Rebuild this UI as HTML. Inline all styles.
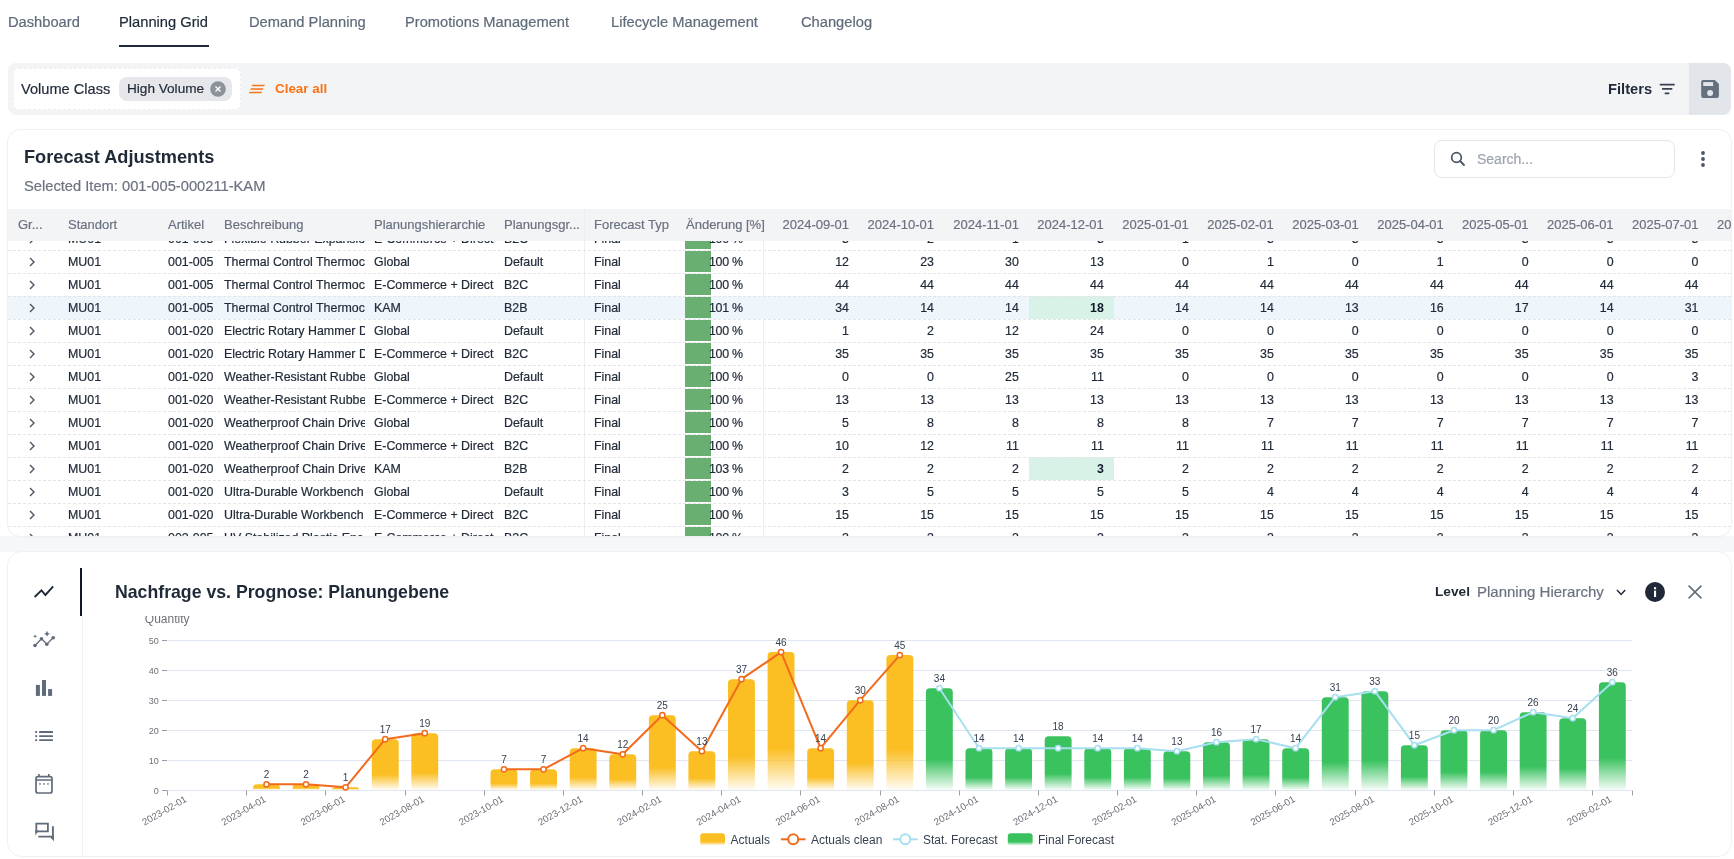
<!DOCTYPE html>
<html><head><meta charset="utf-8">
<style>
html,body{margin:0;padding:0;background:#fff;width:1734px;height:859px;overflow:hidden;}
body{position:relative;font-family:"Liberation Sans", sans-serif;}
#root{position:absolute;left:0;top:0;width:1734px;height:859px;will-change:transform;background:#fff}
.t{position:absolute;white-space:nowrap;line-height:20px;-webkit-text-stroke:0.2px currentColor}
.a{position:absolute;}
</style></head><body><div id="root">

<div class="a" style="left:0;top:536px;width:1734px;height:16px;background:#f6f7f9"></div>
<div class="t" style="left:8px;top:12.0px;font-size:14.7px;color:#5f6b7a;font-weight:400;">Dashboard</div>
<div class="t" style="left:119px;top:12.0px;font-size:14.7px;color:#1f2937;font-weight:400;">Planning Grid</div>
<div class="t" style="left:249px;top:12.0px;font-size:14.7px;color:#5f6b7a;font-weight:400;">Demand Planning</div>
<div class="t" style="left:405px;top:12.0px;font-size:14.7px;color:#5f6b7a;font-weight:400;">Promotions Management</div>
<div class="t" style="left:611px;top:12.0px;font-size:14.7px;color:#5f6b7a;font-weight:400;">Lifecycle Management</div>
<div class="t" style="left:801px;top:12.0px;font-size:14.7px;color:#5f6b7a;font-weight:400;">Changelog</div>
<div class="a" style="left:119px;top:45px;width:90px;height:2px;background:#1f2937"></div>
<div class="a" style="left:8px;top:63px;width:1723px;height:52px;background:#f3f4f6;border-radius:8px;overflow:hidden"><div class="a" style="right:0;top:0;width:42px;height:52px;background:#e2e5e9"></div></div>
<div class="a" style="left:13px;top:68px;width:228px;height:42px;background:#fff;border-radius:6px;box-sizing:border-box;border:1px dashed #eceef1"></div>
<div class="t" style="left:21px;top:78.5px;font-size:14.6px;color:#1f2937;font-weight:400;">Volume Class</div>
<div class="a" style="left:119px;top:77px;width:113px;height:24px;background:#e5e7eb;border-radius:8px"></div>
<div class="t" style="left:127px;top:78.5px;font-size:13.6px;color:#1f2937;font-weight:400;">High Volume</div>
<svg class="a" style="left:210px;top:81px" width="16" height="16" viewBox="0 0 16 16"><circle cx="8" cy="8" r="7.8" fill="#8b929a"/><path d="M5.5 5.5L10.5 10.5M10.5 5.5L5.5 10.5" stroke="#fff" stroke-width="1.4"/></svg>
<svg class="a" style="left:246px;top:80px" width="22" height="16" viewBox="246 80 22 16"><path d="M252.4 84.7H265L264.1 86.3H251.5Z M251 88.2H263.6L262.7 89.8H250.1Z M249.6 91.7H262.2L261.3 93.3H248.7Z" fill="#f97316"/></svg>
<div class="t" style="left:275px;top:78.5px;font-size:13.4px;color:#f97316;font-weight:700;;-webkit-text-stroke:0">Clear all</div>
<div class="t" style="left:1608px;top:78.5px;font-size:14.7px;color:#1f2937;font-weight:700;;-webkit-text-stroke:0">Filters</div>
<svg class="a" style="left:1659px;top:82px" width="16" height="14" viewBox="0 0 16 14"><path d="M1.5 2.6H15M3.8 6.9H12.6M6.4 11.3H9.6" stroke="#374151" stroke-width="1.8" stroke-linecap="round"/></svg>
<svg class="a" style="left:1700px;top:78px" width="20" height="21" viewBox="1700 78 20 21"><path d="M1703.2 79.9H1714.9L1718.9 83.9V95.9Q1718.9 97.9 1716.9 97.9H1703.2Q1701.2 97.9 1701.2 95.9V81.9Q1701.2 79.9 1703.2 79.9Z" fill="#64707d"/><rect x="1703.2" y="82.1" width="9.9" height="3.9" fill="#e2e5e9"/><circle cx="1710.1" cy="93.1" r="3" fill="#e2e5e9"/></svg>
<div class="a" style="left:8px;top:130px;width:1723px;height:406px;background:#fff;border-radius:13px;box-shadow:0 0 0 1px #f0f1f3,0 1px 3px rgba(0,0,0,0.03);overflow:hidden" id="card1">
<div class="t" style="left:16px;top:16.5px;font-size:18.2px;color:#1f2937;font-weight:700;;-webkit-text-stroke:0">Forecast Adjustments</div>
<div class="t" style="left:16px;top:46.0px;font-size:14.7px;color:#6b7280;font-weight:400;">Selected Item: 001-005-000211-KAM</div>
<div class="a" style="left:1426px;top:10px;width:241px;height:38px;box-sizing:border-box;border:1px solid #e3e6ea;border-radius:8px;background:#fff"></div>
<svg class="a" style="left:1442px;top:21px" width="16" height="16" viewBox="0 0 16 16"><circle cx="6.5" cy="6.5" r="4.8" fill="none" stroke="#4b5563" stroke-width="1.7"/><path d="M10 10L14 14" stroke="#4b5563" stroke-width="1.8" stroke-linecap="round"/></svg>
<div class="t" style="left:1469px;top:19.0px;font-size:14px;color:#9ca3af;font-weight:400;">Search...</div>
<svg class="a" style="left:1691px;top:20px" width="8" height="18" viewBox="0 0 8 18"><circle cx="4" cy="3" r="1.9" fill="#4b5563"/><circle cx="4" cy="9" r="1.9" fill="#4b5563"/><circle cx="4" cy="15" r="1.9" fill="#4b5563"/></svg>
<div class="a" style="left:0;top:79px;width:1723px;height:32px;background:#f3f4f6"></div>
<div class="t" style="left:10px;top:84.5px;font-size:13px;color:#6b7280;font-weight:400;">Gr...</div>
<div class="t" style="left:60px;top:84.5px;font-size:13px;color:#6b7280;font-weight:400;">Standort</div>
<div class="t" style="left:160px;top:84.5px;font-size:13px;color:#6b7280;font-weight:400;">Artikel</div>
<div class="t" style="left:216px;top:84.5px;font-size:13px;color:#6b7280;font-weight:400;">Beschreibung</div>
<div class="t" style="left:366px;top:84.5px;font-size:13px;color:#6b7280;font-weight:400;">Planungshierarchie</div>
<div class="t" style="left:496px;top:84.5px;font-size:13px;color:#6b7280;font-weight:400;">Planungsgr...</div>
<div class="t" style="left:586px;top:84.5px;font-size:13px;color:#6b7280;font-weight:400;">Forecast Typ</div>
<div class="t" style="left:678px;top:84.5px;font-size:13px;color:#6b7280;font-weight:400;">Änderung [%]</div>
<div class="t" style="left:441.0px;width:400px;top:84.5px;font-size:13px;color:#6b7280;font-weight:400;text-align:right;">2024-09-01</div>
<div class="t" style="left:526.0px;width:400px;top:84.5px;font-size:13px;color:#6b7280;font-weight:400;text-align:right;">2024-10-01</div>
<div class="t" style="left:610.9px;width:400px;top:84.5px;font-size:13px;color:#6b7280;font-weight:400;text-align:right;">2024-11-01</div>
<div class="t" style="left:695.8px;width:400px;top:84.5px;font-size:13px;color:#6b7280;font-weight:400;text-align:right;">2024-12-01</div>
<div class="t" style="left:780.8px;width:400px;top:84.5px;font-size:13px;color:#6b7280;font-weight:400;text-align:right;">2025-01-01</div>
<div class="t" style="left:865.8px;width:400px;top:84.5px;font-size:13px;color:#6b7280;font-weight:400;text-align:right;">2025-02-01</div>
<div class="t" style="left:950.7px;width:400px;top:84.5px;font-size:13px;color:#6b7280;font-weight:400;text-align:right;">2025-03-01</div>
<div class="t" style="left:1035.7px;width:400px;top:84.5px;font-size:13px;color:#6b7280;font-weight:400;text-align:right;">2025-04-01</div>
<div class="t" style="left:1120.6px;width:400px;top:84.5px;font-size:13px;color:#6b7280;font-weight:400;text-align:right;">2025-05-01</div>
<div class="t" style="left:1205.6px;width:400px;top:84.5px;font-size:13px;color:#6b7280;font-weight:400;text-align:right;">2025-06-01</div>
<div class="t" style="left:1290.5px;width:400px;top:84.5px;font-size:13px;color:#6b7280;font-weight:400;text-align:right;">2025-07-01</div>
<div class="t" style="left:1375.5px;width:400px;top:84.5px;font-size:13px;color:#6b7280;font-weight:400;text-align:right;">2025-08-01</div>
<div class="a" style="left:576px;top:79px;width:1px;height:327px;background:#eceef1"></div>
<div class="a" style="left:755px;top:111px;width:1px;height:295px;background:#eceef1"></div>
<div class="a" style="left:0;top:111px;width:1723px;height:295px;overflow:hidden">
<div class="a" style="left:0;top:55px;width:1723px;height:23px;background:#eef5fb"></div>
<div class="a" style="left:1021px;top:55px;width:85px;height:23px;background:#d9f2e8"></div>
<div class="a" style="left:1021px;top:216px;width:85px;height:23px;background:#d9f2e8"></div>
<div class="a" style="left:0;top:9px;width:1723px;height:1px;background:repeating-linear-gradient(90deg,#e3e5e9 0 3px,transparent 3px 5px)"></div>
<div class="a" style="left:677px;top:-13px;width:26px;height:21px;background:#6aaf72"></div>
<svg class="a" style="left:20px;top:-7.5px" width="8" height="10" viewBox="0 0 8 10"><path d="M2 1L6 5L2 9" fill="none" stroke="#4b5563" stroke-width="1.4"/></svg>
<div class="t" style="left:60px;top:-12.5px;font-size:12.4px;color:#1f2937;font-weight:400;">MU01</div>
<div class="t" style="left:160px;top:-12.5px;font-size:12.4px;color:#1f2937;font-weight:400;">001-005</div>
<div class="a" style="left:216px;top:-12.5px;width:141px;overflow:hidden"><div class="t" style="position:relative;font-size:12.4px;color:#1f2937">Flexible Rubber Expansio</div></div>
<div class="t" style="left:366px;top:-12.5px;font-size:12.4px;color:#1f2937;font-weight:400;">E-Commerce + Direct</div>
<div class="t" style="left:496px;top:-12.5px;font-size:12.4px;color:#1f2937;font-weight:400;">B2C</div>
<div class="t" style="left:586px;top:-12.5px;font-size:12.4px;color:#1f2937;font-weight:400;">Final</div>
<div class="t" style="left:701px;top:-12.5px;font-size:12.4px;color:#1f2937;font-weight:400;letter-spacing:-0.3px">100 %</div>
<div class="t" style="left:441.0px;width:400px;top:-12.5px;font-size:12.4px;color:#1f2937;font-weight:400;text-align:right;">3</div>
<div class="t" style="left:526.0px;width:400px;top:-12.5px;font-size:12.4px;color:#1f2937;font-weight:400;text-align:right;">2</div>
<div class="t" style="left:610.9px;width:400px;top:-12.5px;font-size:12.4px;color:#1f2937;font-weight:400;text-align:right;">1</div>
<div class="t" style="left:695.8px;width:400px;top:-12.5px;font-size:12.4px;color:#1f2937;font-weight:400;text-align:right;">3</div>
<div class="t" style="left:780.8px;width:400px;top:-12.5px;font-size:12.4px;color:#1f2937;font-weight:400;text-align:right;">1</div>
<div class="t" style="left:865.8px;width:400px;top:-12.5px;font-size:12.4px;color:#1f2937;font-weight:400;text-align:right;">3</div>
<div class="t" style="left:950.7px;width:400px;top:-12.5px;font-size:12.4px;color:#1f2937;font-weight:400;text-align:right;">3</div>
<div class="t" style="left:1035.7px;width:400px;top:-12.5px;font-size:12.4px;color:#1f2937;font-weight:400;text-align:right;">3</div>
<div class="t" style="left:1120.6px;width:400px;top:-12.5px;font-size:12.4px;color:#1f2937;font-weight:400;text-align:right;">3</div>
<div class="t" style="left:1205.6px;width:400px;top:-12.5px;font-size:12.4px;color:#1f2937;font-weight:400;text-align:right;">3</div>
<div class="t" style="left:1290.5px;width:400px;top:-12.5px;font-size:12.4px;color:#1f2937;font-weight:400;text-align:right;">3</div>
<div class="t" style="left:1375.5px;width:400px;top:-12.5px;font-size:12.4px;color:#1f2937;font-weight:400;text-align:right;">3</div>
<div class="a" style="left:0;top:32px;width:1723px;height:1px;background:repeating-linear-gradient(90deg,#e3e5e9 0 3px,transparent 3px 5px)"></div>
<div class="a" style="left:677px;top:10px;width:26px;height:21px;background:#6aaf72"></div>
<svg class="a" style="left:20px;top:15.5px" width="8" height="10" viewBox="0 0 8 10"><path d="M2 1L6 5L2 9" fill="none" stroke="#4b5563" stroke-width="1.4"/></svg>
<div class="t" style="left:60px;top:10.5px;font-size:12.4px;color:#1f2937;font-weight:400;">MU01</div>
<div class="t" style="left:160px;top:10.5px;font-size:12.4px;color:#1f2937;font-weight:400;">001-005</div>
<div class="a" style="left:216px;top:10.5px;width:141px;overflow:hidden"><div class="t" style="position:relative;font-size:12.4px;color:#1f2937">Thermal Control Thermoc</div></div>
<div class="t" style="left:366px;top:10.5px;font-size:12.4px;color:#1f2937;font-weight:400;">Global</div>
<div class="t" style="left:496px;top:10.5px;font-size:12.4px;color:#1f2937;font-weight:400;">Default</div>
<div class="t" style="left:586px;top:10.5px;font-size:12.4px;color:#1f2937;font-weight:400;">Final</div>
<div class="t" style="left:701px;top:10.5px;font-size:12.4px;color:#1f2937;font-weight:400;letter-spacing:-0.3px">100 %</div>
<div class="t" style="left:441.0px;width:400px;top:10.5px;font-size:12.4px;color:#1f2937;font-weight:400;text-align:right;">12</div>
<div class="t" style="left:526.0px;width:400px;top:10.5px;font-size:12.4px;color:#1f2937;font-weight:400;text-align:right;">23</div>
<div class="t" style="left:610.9px;width:400px;top:10.5px;font-size:12.4px;color:#1f2937;font-weight:400;text-align:right;">30</div>
<div class="t" style="left:695.8px;width:400px;top:10.5px;font-size:12.4px;color:#1f2937;font-weight:400;text-align:right;">13</div>
<div class="t" style="left:780.8px;width:400px;top:10.5px;font-size:12.4px;color:#1f2937;font-weight:400;text-align:right;">0</div>
<div class="t" style="left:865.8px;width:400px;top:10.5px;font-size:12.4px;color:#1f2937;font-weight:400;text-align:right;">1</div>
<div class="t" style="left:950.7px;width:400px;top:10.5px;font-size:12.4px;color:#1f2937;font-weight:400;text-align:right;">0</div>
<div class="t" style="left:1035.7px;width:400px;top:10.5px;font-size:12.4px;color:#1f2937;font-weight:400;text-align:right;">1</div>
<div class="t" style="left:1120.6px;width:400px;top:10.5px;font-size:12.4px;color:#1f2937;font-weight:400;text-align:right;">0</div>
<div class="t" style="left:1205.6px;width:400px;top:10.5px;font-size:12.4px;color:#1f2937;font-weight:400;text-align:right;">0</div>
<div class="t" style="left:1290.5px;width:400px;top:10.5px;font-size:12.4px;color:#1f2937;font-weight:400;text-align:right;">0</div>
<div class="t" style="left:1375.5px;width:400px;top:10.5px;font-size:12.4px;color:#1f2937;font-weight:400;text-align:right;">0</div>
<div class="a" style="left:0;top:55px;width:1723px;height:1px;background:repeating-linear-gradient(90deg,#e3e5e9 0 3px,transparent 3px 5px)"></div>
<div class="a" style="left:677px;top:33px;width:26px;height:21px;background:#6aaf72"></div>
<svg class="a" style="left:20px;top:38.5px" width="8" height="10" viewBox="0 0 8 10"><path d="M2 1L6 5L2 9" fill="none" stroke="#4b5563" stroke-width="1.4"/></svg>
<div class="t" style="left:60px;top:33.5px;font-size:12.4px;color:#1f2937;font-weight:400;">MU01</div>
<div class="t" style="left:160px;top:33.5px;font-size:12.4px;color:#1f2937;font-weight:400;">001-005</div>
<div class="a" style="left:216px;top:33.5px;width:141px;overflow:hidden"><div class="t" style="position:relative;font-size:12.4px;color:#1f2937">Thermal Control Thermoc</div></div>
<div class="t" style="left:366px;top:33.5px;font-size:12.4px;color:#1f2937;font-weight:400;">E-Commerce + Direct</div>
<div class="t" style="left:496px;top:33.5px;font-size:12.4px;color:#1f2937;font-weight:400;">B2C</div>
<div class="t" style="left:586px;top:33.5px;font-size:12.4px;color:#1f2937;font-weight:400;">Final</div>
<div class="t" style="left:701px;top:33.5px;font-size:12.4px;color:#1f2937;font-weight:400;letter-spacing:-0.3px">100 %</div>
<div class="t" style="left:441.0px;width:400px;top:33.5px;font-size:12.4px;color:#1f2937;font-weight:400;text-align:right;">44</div>
<div class="t" style="left:526.0px;width:400px;top:33.5px;font-size:12.4px;color:#1f2937;font-weight:400;text-align:right;">44</div>
<div class="t" style="left:610.9px;width:400px;top:33.5px;font-size:12.4px;color:#1f2937;font-weight:400;text-align:right;">44</div>
<div class="t" style="left:695.8px;width:400px;top:33.5px;font-size:12.4px;color:#1f2937;font-weight:400;text-align:right;">44</div>
<div class="t" style="left:780.8px;width:400px;top:33.5px;font-size:12.4px;color:#1f2937;font-weight:400;text-align:right;">44</div>
<div class="t" style="left:865.8px;width:400px;top:33.5px;font-size:12.4px;color:#1f2937;font-weight:400;text-align:right;">44</div>
<div class="t" style="left:950.7px;width:400px;top:33.5px;font-size:12.4px;color:#1f2937;font-weight:400;text-align:right;">44</div>
<div class="t" style="left:1035.7px;width:400px;top:33.5px;font-size:12.4px;color:#1f2937;font-weight:400;text-align:right;">44</div>
<div class="t" style="left:1120.6px;width:400px;top:33.5px;font-size:12.4px;color:#1f2937;font-weight:400;text-align:right;">44</div>
<div class="t" style="left:1205.6px;width:400px;top:33.5px;font-size:12.4px;color:#1f2937;font-weight:400;text-align:right;">44</div>
<div class="t" style="left:1290.5px;width:400px;top:33.5px;font-size:12.4px;color:#1f2937;font-weight:400;text-align:right;">44</div>
<div class="t" style="left:1375.5px;width:400px;top:33.5px;font-size:12.4px;color:#1f2937;font-weight:400;text-align:right;">44</div>
<div class="a" style="left:0;top:78px;width:1723px;height:1px;background:repeating-linear-gradient(90deg,#e3e5e9 0 3px,transparent 3px 5px)"></div>
<div class="a" style="left:677px;top:56px;width:26px;height:21px;background:#6aaf72"></div>
<svg class="a" style="left:20px;top:61.5px" width="8" height="10" viewBox="0 0 8 10"><path d="M2 1L6 5L2 9" fill="none" stroke="#4b5563" stroke-width="1.4"/></svg>
<div class="t" style="left:60px;top:56.5px;font-size:12.4px;color:#1f2937;font-weight:400;">MU01</div>
<div class="t" style="left:160px;top:56.5px;font-size:12.4px;color:#1f2937;font-weight:400;">001-005</div>
<div class="a" style="left:216px;top:56.5px;width:141px;overflow:hidden"><div class="t" style="position:relative;font-size:12.4px;color:#1f2937">Thermal Control Thermoc</div></div>
<div class="t" style="left:366px;top:56.5px;font-size:12.4px;color:#1f2937;font-weight:400;">KAM</div>
<div class="t" style="left:496px;top:56.5px;font-size:12.4px;color:#1f2937;font-weight:400;">B2B</div>
<div class="t" style="left:586px;top:56.5px;font-size:12.4px;color:#1f2937;font-weight:400;">Final</div>
<div class="t" style="left:701px;top:56.5px;font-size:12.4px;color:#1f2937;font-weight:400;letter-spacing:-0.3px">101 %</div>
<div class="t" style="left:441.0px;width:400px;top:56.5px;font-size:12.4px;color:#1f2937;font-weight:400;text-align:right;">34</div>
<div class="t" style="left:526.0px;width:400px;top:56.5px;font-size:12.4px;color:#1f2937;font-weight:400;text-align:right;">14</div>
<div class="t" style="left:610.9px;width:400px;top:56.5px;font-size:12.4px;color:#1f2937;font-weight:400;text-align:right;">14</div>
<div class="t" style="left:695.8px;width:400px;top:56.5px;font-size:12.4px;color:#111827;font-weight:700;text-align:right;;-webkit-text-stroke:0">18</div>
<div class="t" style="left:780.8px;width:400px;top:56.5px;font-size:12.4px;color:#1f2937;font-weight:400;text-align:right;">14</div>
<div class="t" style="left:865.8px;width:400px;top:56.5px;font-size:12.4px;color:#1f2937;font-weight:400;text-align:right;">14</div>
<div class="t" style="left:950.7px;width:400px;top:56.5px;font-size:12.4px;color:#1f2937;font-weight:400;text-align:right;">13</div>
<div class="t" style="left:1035.7px;width:400px;top:56.5px;font-size:12.4px;color:#1f2937;font-weight:400;text-align:right;">16</div>
<div class="t" style="left:1120.6px;width:400px;top:56.5px;font-size:12.4px;color:#1f2937;font-weight:400;text-align:right;">17</div>
<div class="t" style="left:1205.6px;width:400px;top:56.5px;font-size:12.4px;color:#1f2937;font-weight:400;text-align:right;">14</div>
<div class="t" style="left:1290.5px;width:400px;top:56.5px;font-size:12.4px;color:#1f2937;font-weight:400;text-align:right;">31</div>
<div class="t" style="left:1375.5px;width:400px;top:56.5px;font-size:12.4px;color:#1f2937;font-weight:400;text-align:right;">33</div>
<div class="a" style="left:0;top:101px;width:1723px;height:1px;background:repeating-linear-gradient(90deg,#e3e5e9 0 3px,transparent 3px 5px)"></div>
<div class="a" style="left:677px;top:79px;width:26px;height:21px;background:#6aaf72"></div>
<svg class="a" style="left:20px;top:84.5px" width="8" height="10" viewBox="0 0 8 10"><path d="M2 1L6 5L2 9" fill="none" stroke="#4b5563" stroke-width="1.4"/></svg>
<div class="t" style="left:60px;top:79.5px;font-size:12.4px;color:#1f2937;font-weight:400;">MU01</div>
<div class="t" style="left:160px;top:79.5px;font-size:12.4px;color:#1f2937;font-weight:400;">001-020</div>
<div class="a" style="left:216px;top:79.5px;width:141px;overflow:hidden"><div class="t" style="position:relative;font-size:12.4px;color:#1f2937">Electric Rotary Hammer D</div></div>
<div class="t" style="left:366px;top:79.5px;font-size:12.4px;color:#1f2937;font-weight:400;">Global</div>
<div class="t" style="left:496px;top:79.5px;font-size:12.4px;color:#1f2937;font-weight:400;">Default</div>
<div class="t" style="left:586px;top:79.5px;font-size:12.4px;color:#1f2937;font-weight:400;">Final</div>
<div class="t" style="left:701px;top:79.5px;font-size:12.4px;color:#1f2937;font-weight:400;letter-spacing:-0.3px">100 %</div>
<div class="t" style="left:441.0px;width:400px;top:79.5px;font-size:12.4px;color:#1f2937;font-weight:400;text-align:right;">1</div>
<div class="t" style="left:526.0px;width:400px;top:79.5px;font-size:12.4px;color:#1f2937;font-weight:400;text-align:right;">2</div>
<div class="t" style="left:610.9px;width:400px;top:79.5px;font-size:12.4px;color:#1f2937;font-weight:400;text-align:right;">12</div>
<div class="t" style="left:695.8px;width:400px;top:79.5px;font-size:12.4px;color:#1f2937;font-weight:400;text-align:right;">24</div>
<div class="t" style="left:780.8px;width:400px;top:79.5px;font-size:12.4px;color:#1f2937;font-weight:400;text-align:right;">0</div>
<div class="t" style="left:865.8px;width:400px;top:79.5px;font-size:12.4px;color:#1f2937;font-weight:400;text-align:right;">0</div>
<div class="t" style="left:950.7px;width:400px;top:79.5px;font-size:12.4px;color:#1f2937;font-weight:400;text-align:right;">0</div>
<div class="t" style="left:1035.7px;width:400px;top:79.5px;font-size:12.4px;color:#1f2937;font-weight:400;text-align:right;">0</div>
<div class="t" style="left:1120.6px;width:400px;top:79.5px;font-size:12.4px;color:#1f2937;font-weight:400;text-align:right;">0</div>
<div class="t" style="left:1205.6px;width:400px;top:79.5px;font-size:12.4px;color:#1f2937;font-weight:400;text-align:right;">0</div>
<div class="t" style="left:1290.5px;width:400px;top:79.5px;font-size:12.4px;color:#1f2937;font-weight:400;text-align:right;">0</div>
<div class="t" style="left:1375.5px;width:400px;top:79.5px;font-size:12.4px;color:#1f2937;font-weight:400;text-align:right;">0</div>
<div class="a" style="left:0;top:124px;width:1723px;height:1px;background:repeating-linear-gradient(90deg,#e3e5e9 0 3px,transparent 3px 5px)"></div>
<div class="a" style="left:677px;top:102px;width:26px;height:21px;background:#6aaf72"></div>
<svg class="a" style="left:20px;top:107.5px" width="8" height="10" viewBox="0 0 8 10"><path d="M2 1L6 5L2 9" fill="none" stroke="#4b5563" stroke-width="1.4"/></svg>
<div class="t" style="left:60px;top:102.5px;font-size:12.4px;color:#1f2937;font-weight:400;">MU01</div>
<div class="t" style="left:160px;top:102.5px;font-size:12.4px;color:#1f2937;font-weight:400;">001-020</div>
<div class="a" style="left:216px;top:102.5px;width:141px;overflow:hidden"><div class="t" style="position:relative;font-size:12.4px;color:#1f2937">Electric Rotary Hammer D</div></div>
<div class="t" style="left:366px;top:102.5px;font-size:12.4px;color:#1f2937;font-weight:400;">E-Commerce + Direct</div>
<div class="t" style="left:496px;top:102.5px;font-size:12.4px;color:#1f2937;font-weight:400;">B2C</div>
<div class="t" style="left:586px;top:102.5px;font-size:12.4px;color:#1f2937;font-weight:400;">Final</div>
<div class="t" style="left:701px;top:102.5px;font-size:12.4px;color:#1f2937;font-weight:400;letter-spacing:-0.3px">100 %</div>
<div class="t" style="left:441.0px;width:400px;top:102.5px;font-size:12.4px;color:#1f2937;font-weight:400;text-align:right;">35</div>
<div class="t" style="left:526.0px;width:400px;top:102.5px;font-size:12.4px;color:#1f2937;font-weight:400;text-align:right;">35</div>
<div class="t" style="left:610.9px;width:400px;top:102.5px;font-size:12.4px;color:#1f2937;font-weight:400;text-align:right;">35</div>
<div class="t" style="left:695.8px;width:400px;top:102.5px;font-size:12.4px;color:#1f2937;font-weight:400;text-align:right;">35</div>
<div class="t" style="left:780.8px;width:400px;top:102.5px;font-size:12.4px;color:#1f2937;font-weight:400;text-align:right;">35</div>
<div class="t" style="left:865.8px;width:400px;top:102.5px;font-size:12.4px;color:#1f2937;font-weight:400;text-align:right;">35</div>
<div class="t" style="left:950.7px;width:400px;top:102.5px;font-size:12.4px;color:#1f2937;font-weight:400;text-align:right;">35</div>
<div class="t" style="left:1035.7px;width:400px;top:102.5px;font-size:12.4px;color:#1f2937;font-weight:400;text-align:right;">35</div>
<div class="t" style="left:1120.6px;width:400px;top:102.5px;font-size:12.4px;color:#1f2937;font-weight:400;text-align:right;">35</div>
<div class="t" style="left:1205.6px;width:400px;top:102.5px;font-size:12.4px;color:#1f2937;font-weight:400;text-align:right;">35</div>
<div class="t" style="left:1290.5px;width:400px;top:102.5px;font-size:12.4px;color:#1f2937;font-weight:400;text-align:right;">35</div>
<div class="t" style="left:1375.5px;width:400px;top:102.5px;font-size:12.4px;color:#1f2937;font-weight:400;text-align:right;">35</div>
<div class="a" style="left:0;top:147px;width:1723px;height:1px;background:repeating-linear-gradient(90deg,#e3e5e9 0 3px,transparent 3px 5px)"></div>
<div class="a" style="left:677px;top:125px;width:26px;height:21px;background:#6aaf72"></div>
<svg class="a" style="left:20px;top:130.5px" width="8" height="10" viewBox="0 0 8 10"><path d="M2 1L6 5L2 9" fill="none" stroke="#4b5563" stroke-width="1.4"/></svg>
<div class="t" style="left:60px;top:125.5px;font-size:12.4px;color:#1f2937;font-weight:400;">MU01</div>
<div class="t" style="left:160px;top:125.5px;font-size:12.4px;color:#1f2937;font-weight:400;">001-020</div>
<div class="a" style="left:216px;top:125.5px;width:141px;overflow:hidden"><div class="t" style="position:relative;font-size:12.4px;color:#1f2937">Weather-Resistant Rubbe</div></div>
<div class="t" style="left:366px;top:125.5px;font-size:12.4px;color:#1f2937;font-weight:400;">Global</div>
<div class="t" style="left:496px;top:125.5px;font-size:12.4px;color:#1f2937;font-weight:400;">Default</div>
<div class="t" style="left:586px;top:125.5px;font-size:12.4px;color:#1f2937;font-weight:400;">Final</div>
<div class="t" style="left:701px;top:125.5px;font-size:12.4px;color:#1f2937;font-weight:400;letter-spacing:-0.3px">100 %</div>
<div class="t" style="left:441.0px;width:400px;top:125.5px;font-size:12.4px;color:#1f2937;font-weight:400;text-align:right;">0</div>
<div class="t" style="left:526.0px;width:400px;top:125.5px;font-size:12.4px;color:#1f2937;font-weight:400;text-align:right;">0</div>
<div class="t" style="left:610.9px;width:400px;top:125.5px;font-size:12.4px;color:#1f2937;font-weight:400;text-align:right;">25</div>
<div class="t" style="left:695.8px;width:400px;top:125.5px;font-size:12.4px;color:#1f2937;font-weight:400;text-align:right;">11</div>
<div class="t" style="left:780.8px;width:400px;top:125.5px;font-size:12.4px;color:#1f2937;font-weight:400;text-align:right;">0</div>
<div class="t" style="left:865.8px;width:400px;top:125.5px;font-size:12.4px;color:#1f2937;font-weight:400;text-align:right;">0</div>
<div class="t" style="left:950.7px;width:400px;top:125.5px;font-size:12.4px;color:#1f2937;font-weight:400;text-align:right;">0</div>
<div class="t" style="left:1035.7px;width:400px;top:125.5px;font-size:12.4px;color:#1f2937;font-weight:400;text-align:right;">0</div>
<div class="t" style="left:1120.6px;width:400px;top:125.5px;font-size:12.4px;color:#1f2937;font-weight:400;text-align:right;">0</div>
<div class="t" style="left:1205.6px;width:400px;top:125.5px;font-size:12.4px;color:#1f2937;font-weight:400;text-align:right;">0</div>
<div class="t" style="left:1290.5px;width:400px;top:125.5px;font-size:12.4px;color:#1f2937;font-weight:400;text-align:right;">3</div>
<div class="t" style="left:1375.5px;width:400px;top:125.5px;font-size:12.4px;color:#1f2937;font-weight:400;text-align:right;">3</div>
<div class="a" style="left:0;top:170px;width:1723px;height:1px;background:repeating-linear-gradient(90deg,#e3e5e9 0 3px,transparent 3px 5px)"></div>
<div class="a" style="left:677px;top:148px;width:26px;height:21px;background:#6aaf72"></div>
<svg class="a" style="left:20px;top:153.5px" width="8" height="10" viewBox="0 0 8 10"><path d="M2 1L6 5L2 9" fill="none" stroke="#4b5563" stroke-width="1.4"/></svg>
<div class="t" style="left:60px;top:148.5px;font-size:12.4px;color:#1f2937;font-weight:400;">MU01</div>
<div class="t" style="left:160px;top:148.5px;font-size:12.4px;color:#1f2937;font-weight:400;">001-020</div>
<div class="a" style="left:216px;top:148.5px;width:141px;overflow:hidden"><div class="t" style="position:relative;font-size:12.4px;color:#1f2937">Weather-Resistant Rubbe</div></div>
<div class="t" style="left:366px;top:148.5px;font-size:12.4px;color:#1f2937;font-weight:400;">E-Commerce + Direct</div>
<div class="t" style="left:496px;top:148.5px;font-size:12.4px;color:#1f2937;font-weight:400;">B2C</div>
<div class="t" style="left:586px;top:148.5px;font-size:12.4px;color:#1f2937;font-weight:400;">Final</div>
<div class="t" style="left:701px;top:148.5px;font-size:12.4px;color:#1f2937;font-weight:400;letter-spacing:-0.3px">100 %</div>
<div class="t" style="left:441.0px;width:400px;top:148.5px;font-size:12.4px;color:#1f2937;font-weight:400;text-align:right;">13</div>
<div class="t" style="left:526.0px;width:400px;top:148.5px;font-size:12.4px;color:#1f2937;font-weight:400;text-align:right;">13</div>
<div class="t" style="left:610.9px;width:400px;top:148.5px;font-size:12.4px;color:#1f2937;font-weight:400;text-align:right;">13</div>
<div class="t" style="left:695.8px;width:400px;top:148.5px;font-size:12.4px;color:#1f2937;font-weight:400;text-align:right;">13</div>
<div class="t" style="left:780.8px;width:400px;top:148.5px;font-size:12.4px;color:#1f2937;font-weight:400;text-align:right;">13</div>
<div class="t" style="left:865.8px;width:400px;top:148.5px;font-size:12.4px;color:#1f2937;font-weight:400;text-align:right;">13</div>
<div class="t" style="left:950.7px;width:400px;top:148.5px;font-size:12.4px;color:#1f2937;font-weight:400;text-align:right;">13</div>
<div class="t" style="left:1035.7px;width:400px;top:148.5px;font-size:12.4px;color:#1f2937;font-weight:400;text-align:right;">13</div>
<div class="t" style="left:1120.6px;width:400px;top:148.5px;font-size:12.4px;color:#1f2937;font-weight:400;text-align:right;">13</div>
<div class="t" style="left:1205.6px;width:400px;top:148.5px;font-size:12.4px;color:#1f2937;font-weight:400;text-align:right;">13</div>
<div class="t" style="left:1290.5px;width:400px;top:148.5px;font-size:12.4px;color:#1f2937;font-weight:400;text-align:right;">13</div>
<div class="t" style="left:1375.5px;width:400px;top:148.5px;font-size:12.4px;color:#1f2937;font-weight:400;text-align:right;">13</div>
<div class="a" style="left:0;top:193px;width:1723px;height:1px;background:repeating-linear-gradient(90deg,#e3e5e9 0 3px,transparent 3px 5px)"></div>
<div class="a" style="left:677px;top:171px;width:26px;height:21px;background:#6aaf72"></div>
<svg class="a" style="left:20px;top:176.5px" width="8" height="10" viewBox="0 0 8 10"><path d="M2 1L6 5L2 9" fill="none" stroke="#4b5563" stroke-width="1.4"/></svg>
<div class="t" style="left:60px;top:171.5px;font-size:12.4px;color:#1f2937;font-weight:400;">MU01</div>
<div class="t" style="left:160px;top:171.5px;font-size:12.4px;color:#1f2937;font-weight:400;">001-020</div>
<div class="a" style="left:216px;top:171.5px;width:141px;overflow:hidden"><div class="t" style="position:relative;font-size:12.4px;color:#1f2937">Weatherproof Chain Drive</div></div>
<div class="t" style="left:366px;top:171.5px;font-size:12.4px;color:#1f2937;font-weight:400;">Global</div>
<div class="t" style="left:496px;top:171.5px;font-size:12.4px;color:#1f2937;font-weight:400;">Default</div>
<div class="t" style="left:586px;top:171.5px;font-size:12.4px;color:#1f2937;font-weight:400;">Final</div>
<div class="t" style="left:701px;top:171.5px;font-size:12.4px;color:#1f2937;font-weight:400;letter-spacing:-0.3px">100 %</div>
<div class="t" style="left:441.0px;width:400px;top:171.5px;font-size:12.4px;color:#1f2937;font-weight:400;text-align:right;">5</div>
<div class="t" style="left:526.0px;width:400px;top:171.5px;font-size:12.4px;color:#1f2937;font-weight:400;text-align:right;">8</div>
<div class="t" style="left:610.9px;width:400px;top:171.5px;font-size:12.4px;color:#1f2937;font-weight:400;text-align:right;">8</div>
<div class="t" style="left:695.8px;width:400px;top:171.5px;font-size:12.4px;color:#1f2937;font-weight:400;text-align:right;">8</div>
<div class="t" style="left:780.8px;width:400px;top:171.5px;font-size:12.4px;color:#1f2937;font-weight:400;text-align:right;">8</div>
<div class="t" style="left:865.8px;width:400px;top:171.5px;font-size:12.4px;color:#1f2937;font-weight:400;text-align:right;">7</div>
<div class="t" style="left:950.7px;width:400px;top:171.5px;font-size:12.4px;color:#1f2937;font-weight:400;text-align:right;">7</div>
<div class="t" style="left:1035.7px;width:400px;top:171.5px;font-size:12.4px;color:#1f2937;font-weight:400;text-align:right;">7</div>
<div class="t" style="left:1120.6px;width:400px;top:171.5px;font-size:12.4px;color:#1f2937;font-weight:400;text-align:right;">7</div>
<div class="t" style="left:1205.6px;width:400px;top:171.5px;font-size:12.4px;color:#1f2937;font-weight:400;text-align:right;">7</div>
<div class="t" style="left:1290.5px;width:400px;top:171.5px;font-size:12.4px;color:#1f2937;font-weight:400;text-align:right;">7</div>
<div class="t" style="left:1375.5px;width:400px;top:171.5px;font-size:12.4px;color:#1f2937;font-weight:400;text-align:right;">7</div>
<div class="a" style="left:0;top:216px;width:1723px;height:1px;background:repeating-linear-gradient(90deg,#e3e5e9 0 3px,transparent 3px 5px)"></div>
<div class="a" style="left:677px;top:194px;width:26px;height:21px;background:#6aaf72"></div>
<svg class="a" style="left:20px;top:199.5px" width="8" height="10" viewBox="0 0 8 10"><path d="M2 1L6 5L2 9" fill="none" stroke="#4b5563" stroke-width="1.4"/></svg>
<div class="t" style="left:60px;top:194.5px;font-size:12.4px;color:#1f2937;font-weight:400;">MU01</div>
<div class="t" style="left:160px;top:194.5px;font-size:12.4px;color:#1f2937;font-weight:400;">001-020</div>
<div class="a" style="left:216px;top:194.5px;width:141px;overflow:hidden"><div class="t" style="position:relative;font-size:12.4px;color:#1f2937">Weatherproof Chain Drive</div></div>
<div class="t" style="left:366px;top:194.5px;font-size:12.4px;color:#1f2937;font-weight:400;">E-Commerce + Direct</div>
<div class="t" style="left:496px;top:194.5px;font-size:12.4px;color:#1f2937;font-weight:400;">B2C</div>
<div class="t" style="left:586px;top:194.5px;font-size:12.4px;color:#1f2937;font-weight:400;">Final</div>
<div class="t" style="left:701px;top:194.5px;font-size:12.4px;color:#1f2937;font-weight:400;letter-spacing:-0.3px">100 %</div>
<div class="t" style="left:441.0px;width:400px;top:194.5px;font-size:12.4px;color:#1f2937;font-weight:400;text-align:right;">10</div>
<div class="t" style="left:526.0px;width:400px;top:194.5px;font-size:12.4px;color:#1f2937;font-weight:400;text-align:right;">12</div>
<div class="t" style="left:610.9px;width:400px;top:194.5px;font-size:12.4px;color:#1f2937;font-weight:400;text-align:right;">11</div>
<div class="t" style="left:695.8px;width:400px;top:194.5px;font-size:12.4px;color:#1f2937;font-weight:400;text-align:right;">11</div>
<div class="t" style="left:780.8px;width:400px;top:194.5px;font-size:12.4px;color:#1f2937;font-weight:400;text-align:right;">11</div>
<div class="t" style="left:865.8px;width:400px;top:194.5px;font-size:12.4px;color:#1f2937;font-weight:400;text-align:right;">11</div>
<div class="t" style="left:950.7px;width:400px;top:194.5px;font-size:12.4px;color:#1f2937;font-weight:400;text-align:right;">11</div>
<div class="t" style="left:1035.7px;width:400px;top:194.5px;font-size:12.4px;color:#1f2937;font-weight:400;text-align:right;">11</div>
<div class="t" style="left:1120.6px;width:400px;top:194.5px;font-size:12.4px;color:#1f2937;font-weight:400;text-align:right;">11</div>
<div class="t" style="left:1205.6px;width:400px;top:194.5px;font-size:12.4px;color:#1f2937;font-weight:400;text-align:right;">11</div>
<div class="t" style="left:1290.5px;width:400px;top:194.5px;font-size:12.4px;color:#1f2937;font-weight:400;text-align:right;">11</div>
<div class="t" style="left:1375.5px;width:400px;top:194.5px;font-size:12.4px;color:#1f2937;font-weight:400;text-align:right;">11</div>
<div class="a" style="left:0;top:239px;width:1723px;height:1px;background:repeating-linear-gradient(90deg,#e3e5e9 0 3px,transparent 3px 5px)"></div>
<div class="a" style="left:677px;top:217px;width:26px;height:21px;background:#6aaf72"></div>
<svg class="a" style="left:20px;top:222.5px" width="8" height="10" viewBox="0 0 8 10"><path d="M2 1L6 5L2 9" fill="none" stroke="#4b5563" stroke-width="1.4"/></svg>
<div class="t" style="left:60px;top:217.5px;font-size:12.4px;color:#1f2937;font-weight:400;">MU01</div>
<div class="t" style="left:160px;top:217.5px;font-size:12.4px;color:#1f2937;font-weight:400;">001-020</div>
<div class="a" style="left:216px;top:217.5px;width:141px;overflow:hidden"><div class="t" style="position:relative;font-size:12.4px;color:#1f2937">Weatherproof Chain Drive</div></div>
<div class="t" style="left:366px;top:217.5px;font-size:12.4px;color:#1f2937;font-weight:400;">KAM</div>
<div class="t" style="left:496px;top:217.5px;font-size:12.4px;color:#1f2937;font-weight:400;">B2B</div>
<div class="t" style="left:586px;top:217.5px;font-size:12.4px;color:#1f2937;font-weight:400;">Final</div>
<div class="t" style="left:701px;top:217.5px;font-size:12.4px;color:#1f2937;font-weight:400;letter-spacing:-0.3px">103 %</div>
<div class="t" style="left:441.0px;width:400px;top:217.5px;font-size:12.4px;color:#1f2937;font-weight:400;text-align:right;">2</div>
<div class="t" style="left:526.0px;width:400px;top:217.5px;font-size:12.4px;color:#1f2937;font-weight:400;text-align:right;">2</div>
<div class="t" style="left:610.9px;width:400px;top:217.5px;font-size:12.4px;color:#1f2937;font-weight:400;text-align:right;">2</div>
<div class="t" style="left:695.8px;width:400px;top:217.5px;font-size:12.4px;color:#111827;font-weight:700;text-align:right;;-webkit-text-stroke:0">3</div>
<div class="t" style="left:780.8px;width:400px;top:217.5px;font-size:12.4px;color:#1f2937;font-weight:400;text-align:right;">2</div>
<div class="t" style="left:865.8px;width:400px;top:217.5px;font-size:12.4px;color:#1f2937;font-weight:400;text-align:right;">2</div>
<div class="t" style="left:950.7px;width:400px;top:217.5px;font-size:12.4px;color:#1f2937;font-weight:400;text-align:right;">2</div>
<div class="t" style="left:1035.7px;width:400px;top:217.5px;font-size:12.4px;color:#1f2937;font-weight:400;text-align:right;">2</div>
<div class="t" style="left:1120.6px;width:400px;top:217.5px;font-size:12.4px;color:#1f2937;font-weight:400;text-align:right;">2</div>
<div class="t" style="left:1205.6px;width:400px;top:217.5px;font-size:12.4px;color:#1f2937;font-weight:400;text-align:right;">2</div>
<div class="t" style="left:1290.5px;width:400px;top:217.5px;font-size:12.4px;color:#1f2937;font-weight:400;text-align:right;">2</div>
<div class="t" style="left:1375.5px;width:400px;top:217.5px;font-size:12.4px;color:#1f2937;font-weight:400;text-align:right;">2</div>
<div class="a" style="left:0;top:262px;width:1723px;height:1px;background:repeating-linear-gradient(90deg,#e3e5e9 0 3px,transparent 3px 5px)"></div>
<div class="a" style="left:677px;top:240px;width:26px;height:21px;background:#6aaf72"></div>
<svg class="a" style="left:20px;top:245.5px" width="8" height="10" viewBox="0 0 8 10"><path d="M2 1L6 5L2 9" fill="none" stroke="#4b5563" stroke-width="1.4"/></svg>
<div class="t" style="left:60px;top:240.5px;font-size:12.4px;color:#1f2937;font-weight:400;">MU01</div>
<div class="t" style="left:160px;top:240.5px;font-size:12.4px;color:#1f2937;font-weight:400;">001-020</div>
<div class="a" style="left:216px;top:240.5px;width:141px;overflow:hidden"><div class="t" style="position:relative;font-size:12.4px;color:#1f2937">Ultra-Durable Workbench</div></div>
<div class="t" style="left:366px;top:240.5px;font-size:12.4px;color:#1f2937;font-weight:400;">Global</div>
<div class="t" style="left:496px;top:240.5px;font-size:12.4px;color:#1f2937;font-weight:400;">Default</div>
<div class="t" style="left:586px;top:240.5px;font-size:12.4px;color:#1f2937;font-weight:400;">Final</div>
<div class="t" style="left:701px;top:240.5px;font-size:12.4px;color:#1f2937;font-weight:400;letter-spacing:-0.3px">100 %</div>
<div class="t" style="left:441.0px;width:400px;top:240.5px;font-size:12.4px;color:#1f2937;font-weight:400;text-align:right;">3</div>
<div class="t" style="left:526.0px;width:400px;top:240.5px;font-size:12.4px;color:#1f2937;font-weight:400;text-align:right;">5</div>
<div class="t" style="left:610.9px;width:400px;top:240.5px;font-size:12.4px;color:#1f2937;font-weight:400;text-align:right;">5</div>
<div class="t" style="left:695.8px;width:400px;top:240.5px;font-size:12.4px;color:#1f2937;font-weight:400;text-align:right;">5</div>
<div class="t" style="left:780.8px;width:400px;top:240.5px;font-size:12.4px;color:#1f2937;font-weight:400;text-align:right;">5</div>
<div class="t" style="left:865.8px;width:400px;top:240.5px;font-size:12.4px;color:#1f2937;font-weight:400;text-align:right;">4</div>
<div class="t" style="left:950.7px;width:400px;top:240.5px;font-size:12.4px;color:#1f2937;font-weight:400;text-align:right;">4</div>
<div class="t" style="left:1035.7px;width:400px;top:240.5px;font-size:12.4px;color:#1f2937;font-weight:400;text-align:right;">4</div>
<div class="t" style="left:1120.6px;width:400px;top:240.5px;font-size:12.4px;color:#1f2937;font-weight:400;text-align:right;">4</div>
<div class="t" style="left:1205.6px;width:400px;top:240.5px;font-size:12.4px;color:#1f2937;font-weight:400;text-align:right;">4</div>
<div class="t" style="left:1290.5px;width:400px;top:240.5px;font-size:12.4px;color:#1f2937;font-weight:400;text-align:right;">4</div>
<div class="t" style="left:1375.5px;width:400px;top:240.5px;font-size:12.4px;color:#1f2937;font-weight:400;text-align:right;">4</div>
<div class="a" style="left:0;top:285px;width:1723px;height:1px;background:repeating-linear-gradient(90deg,#e3e5e9 0 3px,transparent 3px 5px)"></div>
<div class="a" style="left:677px;top:263px;width:26px;height:21px;background:#6aaf72"></div>
<svg class="a" style="left:20px;top:268.5px" width="8" height="10" viewBox="0 0 8 10"><path d="M2 1L6 5L2 9" fill="none" stroke="#4b5563" stroke-width="1.4"/></svg>
<div class="t" style="left:60px;top:263.5px;font-size:12.4px;color:#1f2937;font-weight:400;">MU01</div>
<div class="t" style="left:160px;top:263.5px;font-size:12.4px;color:#1f2937;font-weight:400;">001-020</div>
<div class="a" style="left:216px;top:263.5px;width:141px;overflow:hidden"><div class="t" style="position:relative;font-size:12.4px;color:#1f2937">Ultra-Durable Workbench</div></div>
<div class="t" style="left:366px;top:263.5px;font-size:12.4px;color:#1f2937;font-weight:400;">E-Commerce + Direct</div>
<div class="t" style="left:496px;top:263.5px;font-size:12.4px;color:#1f2937;font-weight:400;">B2C</div>
<div class="t" style="left:586px;top:263.5px;font-size:12.4px;color:#1f2937;font-weight:400;">Final</div>
<div class="t" style="left:701px;top:263.5px;font-size:12.4px;color:#1f2937;font-weight:400;letter-spacing:-0.3px">100 %</div>
<div class="t" style="left:441.0px;width:400px;top:263.5px;font-size:12.4px;color:#1f2937;font-weight:400;text-align:right;">15</div>
<div class="t" style="left:526.0px;width:400px;top:263.5px;font-size:12.4px;color:#1f2937;font-weight:400;text-align:right;">15</div>
<div class="t" style="left:610.9px;width:400px;top:263.5px;font-size:12.4px;color:#1f2937;font-weight:400;text-align:right;">15</div>
<div class="t" style="left:695.8px;width:400px;top:263.5px;font-size:12.4px;color:#1f2937;font-weight:400;text-align:right;">15</div>
<div class="t" style="left:780.8px;width:400px;top:263.5px;font-size:12.4px;color:#1f2937;font-weight:400;text-align:right;">15</div>
<div class="t" style="left:865.8px;width:400px;top:263.5px;font-size:12.4px;color:#1f2937;font-weight:400;text-align:right;">15</div>
<div class="t" style="left:950.7px;width:400px;top:263.5px;font-size:12.4px;color:#1f2937;font-weight:400;text-align:right;">15</div>
<div class="t" style="left:1035.7px;width:400px;top:263.5px;font-size:12.4px;color:#1f2937;font-weight:400;text-align:right;">15</div>
<div class="t" style="left:1120.6px;width:400px;top:263.5px;font-size:12.4px;color:#1f2937;font-weight:400;text-align:right;">15</div>
<div class="t" style="left:1205.6px;width:400px;top:263.5px;font-size:12.4px;color:#1f2937;font-weight:400;text-align:right;">15</div>
<div class="t" style="left:1290.5px;width:400px;top:263.5px;font-size:12.4px;color:#1f2937;font-weight:400;text-align:right;">15</div>
<div class="t" style="left:1375.5px;width:400px;top:263.5px;font-size:12.4px;color:#1f2937;font-weight:400;text-align:right;">15</div>
<div class="a" style="left:0;top:308px;width:1723px;height:1px;background:repeating-linear-gradient(90deg,#e3e5e9 0 3px,transparent 3px 5px)"></div>
<div class="a" style="left:677px;top:286px;width:26px;height:21px;background:#6aaf72"></div>
<svg class="a" style="left:20px;top:291.5px" width="8" height="10" viewBox="0 0 8 10"><path d="M2 1L6 5L2 9" fill="none" stroke="#4b5563" stroke-width="1.4"/></svg>
<div class="t" style="left:60px;top:286.5px;font-size:12.4px;color:#1f2937;font-weight:400;">MU01</div>
<div class="t" style="left:160px;top:286.5px;font-size:12.4px;color:#1f2937;font-weight:400;">002-005</div>
<div class="a" style="left:216px;top:286.5px;width:141px;overflow:hidden"><div class="t" style="position:relative;font-size:12.4px;color:#1f2937">UV-Stabilized Plastic Enc</div></div>
<div class="t" style="left:366px;top:286.5px;font-size:12.4px;color:#1f2937;font-weight:400;">E-Commerce + Direct</div>
<div class="t" style="left:496px;top:286.5px;font-size:12.4px;color:#1f2937;font-weight:400;">B2C</div>
<div class="t" style="left:586px;top:286.5px;font-size:12.4px;color:#1f2937;font-weight:400;">Final</div>
<div class="t" style="left:701px;top:286.5px;font-size:12.4px;color:#1f2937;font-weight:400;letter-spacing:-0.3px">100 %</div>
<div class="t" style="left:441.0px;width:400px;top:286.5px;font-size:12.4px;color:#1f2937;font-weight:400;text-align:right;">3</div>
<div class="t" style="left:526.0px;width:400px;top:286.5px;font-size:12.4px;color:#1f2937;font-weight:400;text-align:right;">3</div>
<div class="t" style="left:610.9px;width:400px;top:286.5px;font-size:12.4px;color:#1f2937;font-weight:400;text-align:right;">3</div>
<div class="t" style="left:695.8px;width:400px;top:286.5px;font-size:12.4px;color:#1f2937;font-weight:400;text-align:right;">3</div>
<div class="t" style="left:780.8px;width:400px;top:286.5px;font-size:12.4px;color:#1f2937;font-weight:400;text-align:right;">3</div>
<div class="t" style="left:865.8px;width:400px;top:286.5px;font-size:12.4px;color:#1f2937;font-weight:400;text-align:right;">3</div>
<div class="t" style="left:950.7px;width:400px;top:286.5px;font-size:12.4px;color:#1f2937;font-weight:400;text-align:right;">3</div>
<div class="t" style="left:1035.7px;width:400px;top:286.5px;font-size:12.4px;color:#1f2937;font-weight:400;text-align:right;">3</div>
<div class="t" style="left:1120.6px;width:400px;top:286.5px;font-size:12.4px;color:#1f2937;font-weight:400;text-align:right;">3</div>
<div class="t" style="left:1205.6px;width:400px;top:286.5px;font-size:12.4px;color:#1f2937;font-weight:400;text-align:right;">3</div>
<div class="t" style="left:1290.5px;width:400px;top:286.5px;font-size:12.4px;color:#1f2937;font-weight:400;text-align:right;">3</div>
<div class="t" style="left:1375.5px;width:400px;top:286.5px;font-size:12.4px;color:#1f2937;font-weight:400;text-align:right;">3</div>
</div>
</div>
<div class="a" style="left:8px;top:552px;width:1723px;height:304px;background:#fff;border-radius:14px;box-shadow:0 0 0 1px #f0f1f3,0 1px 3px rgba(0,0,0,0.03);overflow:hidden">
<div class="a" style="left:74px;top:64px;width:1px;height:300px;background:#eef0f3"></div>
<div class="a" style="left:72px;top:16px;width:2px;height:48px;background:#111827"></div>
<svg class="a" style="left:0;top:0" width="80" height="304" viewBox="8 552 80 304">
<path d="M34.6 597L41.5 590.4L45.4 595L53.2 586.3" fill="none" stroke="#1f2937" stroke-width="1.9" stroke-linecap="butt" stroke-linejoin="miter"/>
<path d="M35 645.5L41.5 638.8L46.8 644.2L53.2 637.8" fill="none" stroke="#5f6b7a" stroke-width="1.3"/>
<circle cx="35" cy="645.5" r="1.8" fill="#5f6b7a"/><circle cx="41.5" cy="638.8" r="1.8" fill="#5f6b7a"/><circle cx="46.8" cy="644.2" r="1.8" fill="#5f6b7a"/><circle cx="53.2" cy="637.8" r="1.8" fill="#5f6b7a"/>
<path d="M35.1 634.2Q35.3 636 37.1 636.2Q35.3 636.4 35.1 638.2Q34.9 636.4 33.1 636.2Q34.9 636 35.1 634.2Z" fill="#5f6b7a"/>
<path d="M47 630.7Q47.3 633.4 50 633.7Q47.3 634 47 636.7Q46.7 634 44 633.7Q46.7 633.4 47 630.7Z" fill="#5f6b7a"/>
<rect x="35.9" y="684.9" width="4" height="11" fill="#5f6b7a"/><rect x="42" y="680" width="4" height="15.9" fill="#5f6b7a"/><rect x="48.1" y="689.1" width="4" height="6.8" fill="#5f6b7a"/>
<rect x="35.2" y="731" width="1.9" height="1.9" fill="#5f6b7a"/><rect x="35.2" y="735.2" width="1.9" height="1.9" fill="#5f6b7a"/><rect x="35.2" y="739.2" width="1.9" height="1.9" fill="#5f6b7a"/>
<rect x="39.1" y="731" width="13.9" height="1.9" rx="0.5" fill="#5f6b7a"/><rect x="39.1" y="735.2" width="13.9" height="1.9" rx="0.5" fill="#5f6b7a"/><rect x="39.1" y="739.2" width="13.9" height="1.9" rx="0.5" fill="#5f6b7a"/>
<rect x="36" y="776.7" width="16" height="16.3" rx="2" fill="none" stroke="#5f6b7a" stroke-width="1.7"/>
<path d="M36 780H52" stroke="#5f6b7a" stroke-width="1.6"/>
<path d="M39 774V777M48.8 774V777" stroke="#5f6b7a" stroke-width="1.6"/>
<rect x="39.2" y="783.2" width="1.5" height="1.5" fill="#5f6b7a"/><rect x="43.2" y="783.2" width="1.5" height="1.5" fill="#5f6b7a"/><rect x="47.2" y="783.2" width="1.5" height="1.5" fill="#5f6b7a"/>
<path d="M36.3 833V823.6H47.9V831.4H37" fill="none" stroke="#5f6b7a" stroke-width="1.8"/>
<path d="M35.4 830.5H38.6L35.4 835.6Z" fill="#5f6b7a"/>
<path d="M38.3 836.6H50M52.9 826.2V839" fill="none" stroke="#5f6b7a" stroke-width="1.9"/>
<path d="M48.8 835.7H53.85V841.3Z" fill="#5f6b7a"/>
</svg>
<div class="t" style="left:107px;top:29.5px;font-size:17.7px;color:#1f2937;font-weight:700;;-webkit-text-stroke:0">Nachfrage vs. Prognose: Planungebene</div>
<div class="t" style="left:1427px;top:29.5px;font-size:13.7px;color:#1f2937;font-weight:700;;-webkit-text-stroke:0">Level</div>
<div class="t" style="left:1469px;top:29.5px;font-size:15px;color:#6b7280;font-weight:400;">Planning Hierarchy</div>
<svg class="a" style="left:1592px;top:18px" width="120" height="45" viewBox="1600 570 120 45">
<path d="M1617 590.1L1621.1 594.4L1625.2 590.1" fill="none" stroke="#1f2937" stroke-width="1.5"/>
<circle cx="1655" cy="592" r="10" fill="#1f2937"/>
<rect x="1654" y="590.6" width="2.1" height="6.4" fill="#fff"/><rect x="1654" y="587.2" width="2.1" height="2.1" fill="#fff"/>
<path d="M1688.6 585.6L1701.4 598.4M1701.4 585.6L1688.6 598.4" stroke="#5f6b7a" stroke-width="1.5"/>
</svg>
<svg class="a" style="left:0;top:64px" width="1723" height="240" viewBox="8 616 1723 240">
<defs><linearGradient id="gy" x1="0" y1="0" x2="0" y2="1"><stop offset="0" stop-color="#fbbf24"/><stop offset="0.7" stop-color="#fbbf24"/><stop offset="1" stop-color="#fbbf24" stop-opacity="0.05"/></linearGradient><linearGradient id="gg" x1="0" y1="0" x2="0" y2="1"><stop offset="0" stop-color="#3ac25f"/><stop offset="0.7" stop-color="#3ac25f"/><stop offset="1" stop-color="#3ac25f" stop-opacity="0.05"/></linearGradient></defs>
<text x="144.8" y="623.3" font-family="Liberation Sans" font-size="12" fill="#6e7079">Quantity</text>
<line x1="162" x2="167" y1="790.5" y2="790.5" stroke="#9a9ea6" stroke-width="1"/>
<text x="158.7" y="793.7" font-family="Liberation Sans" font-size="9" fill="#6e7079" text-anchor="end">0</text>
<line x1="167.5" x2="1632.1" y1="760.5" y2="760.5" stroke="#e0e6f1" stroke-width="1"/>
<line x1="162" x2="167" y1="760.5" y2="760.5" stroke="#9a9ea6" stroke-width="1"/>
<text x="158.7" y="763.7" font-family="Liberation Sans" font-size="9" fill="#6e7079" text-anchor="end">10</text>
<line x1="167.5" x2="1632.1" y1="730.5" y2="730.5" stroke="#e0e6f1" stroke-width="1"/>
<line x1="162" x2="167" y1="730.5" y2="730.5" stroke="#9a9ea6" stroke-width="1"/>
<text x="158.7" y="733.7" font-family="Liberation Sans" font-size="9" fill="#6e7079" text-anchor="end">20</text>
<line x1="167.5" x2="1632.1" y1="700.5" y2="700.5" stroke="#e0e6f1" stroke-width="1"/>
<line x1="162" x2="167" y1="700.5" y2="700.5" stroke="#9a9ea6" stroke-width="1"/>
<text x="158.7" y="703.7" font-family="Liberation Sans" font-size="9" fill="#6e7079" text-anchor="end">30</text>
<line x1="167.5" x2="1632.1" y1="670.5" y2="670.5" stroke="#e0e6f1" stroke-width="1"/>
<line x1="162" x2="167" y1="670.5" y2="670.5" stroke="#9a9ea6" stroke-width="1"/>
<text x="158.7" y="673.7" font-family="Liberation Sans" font-size="9" fill="#6e7079" text-anchor="end">40</text>
<line x1="167.5" x2="1632.1" y1="640.5" y2="640.5" stroke="#e0e6f1" stroke-width="1"/>
<line x1="162" x2="167" y1="640.5" y2="640.5" stroke="#9a9ea6" stroke-width="1"/>
<text x="158.7" y="643.7" font-family="Liberation Sans" font-size="9" fill="#6e7079" text-anchor="end">50</text>
<line x1="167.5" x2="1632.1" y1="790.5" y2="790.5" stroke="#e0e6f1" stroke-width="1"/>
<line x1="167.5" x2="167.5" y1="790.5" y2="795.5" stroke="#9a9ea6" stroke-width="1"/>
<line x1="246.5" x2="246.5" y1="790.5" y2="795.5" stroke="#9a9ea6" stroke-width="1"/>
<line x1="325.5" x2="325.5" y1="790.5" y2="795.5" stroke="#9a9ea6" stroke-width="1"/>
<line x1="405.5" x2="405.5" y1="790.5" y2="795.5" stroke="#9a9ea6" stroke-width="1"/>
<line x1="484.5" x2="484.5" y1="790.5" y2="795.5" stroke="#9a9ea6" stroke-width="1"/>
<line x1="563.5" x2="563.5" y1="790.5" y2="795.5" stroke="#9a9ea6" stroke-width="1"/>
<line x1="642.5" x2="642.5" y1="790.5" y2="795.5" stroke="#9a9ea6" stroke-width="1"/>
<line x1="721.5" x2="721.5" y1="790.5" y2="795.5" stroke="#9a9ea6" stroke-width="1"/>
<line x1="800.5" x2="800.5" y1="790.5" y2="795.5" stroke="#9a9ea6" stroke-width="1"/>
<line x1="880.5" x2="880.5" y1="790.5" y2="795.5" stroke="#9a9ea6" stroke-width="1"/>
<line x1="959.5" x2="959.5" y1="790.5" y2="795.5" stroke="#9a9ea6" stroke-width="1"/>
<line x1="1038.5" x2="1038.5" y1="790.5" y2="795.5" stroke="#9a9ea6" stroke-width="1"/>
<line x1="1117.5" x2="1117.5" y1="790.5" y2="795.5" stroke="#9a9ea6" stroke-width="1"/>
<line x1="1196.5" x2="1196.5" y1="790.5" y2="795.5" stroke="#9a9ea6" stroke-width="1"/>
<line x1="1275.5" x2="1275.5" y1="790.5" y2="795.5" stroke="#9a9ea6" stroke-width="1"/>
<line x1="1355.5" x2="1355.5" y1="790.5" y2="795.5" stroke="#9a9ea6" stroke-width="1"/>
<line x1="1434.5" x2="1434.5" y1="790.5" y2="795.5" stroke="#9a9ea6" stroke-width="1"/>
<line x1="1513.5" x2="1513.5" y1="790.5" y2="795.5" stroke="#9a9ea6" stroke-width="1"/>
<line x1="1592.5" x2="1592.5" y1="790.5" y2="795.5" stroke="#9a9ea6" stroke-width="1"/>
<line x1="1632.5" x2="1632.5" y1="790.5" y2="795.5" stroke="#9a9ea6" stroke-width="1"/>
<text x="185.8" y="801.5" font-family="Liberation Sans" font-size="9.7" fill="#6e7079" text-anchor="end" transform="rotate(-30 185.8 798)">2023-02-01</text>
<text x="265.0" y="801.5" font-family="Liberation Sans" font-size="9.7" fill="#6e7079" text-anchor="end" transform="rotate(-30 265.0 798)">2023-04-01</text>
<text x="344.1" y="801.5" font-family="Liberation Sans" font-size="9.7" fill="#6e7079" text-anchor="end" transform="rotate(-30 344.1 798)">2023-06-01</text>
<text x="423.3" y="801.5" font-family="Liberation Sans" font-size="9.7" fill="#6e7079" text-anchor="end" transform="rotate(-30 423.3 798)">2023-08-01</text>
<text x="502.5" y="801.5" font-family="Liberation Sans" font-size="9.7" fill="#6e7079" text-anchor="end" transform="rotate(-30 502.5 798)">2023-10-01</text>
<text x="581.6" y="801.5" font-family="Liberation Sans" font-size="9.7" fill="#6e7079" text-anchor="end" transform="rotate(-30 581.6 798)">2023-12-01</text>
<text x="660.8" y="801.5" font-family="Liberation Sans" font-size="9.7" fill="#6e7079" text-anchor="end" transform="rotate(-30 660.8 798)">2024-02-01</text>
<text x="740.0" y="801.5" font-family="Liberation Sans" font-size="9.7" fill="#6e7079" text-anchor="end" transform="rotate(-30 740.0 798)">2024-04-01</text>
<text x="819.1" y="801.5" font-family="Liberation Sans" font-size="9.7" fill="#6e7079" text-anchor="end" transform="rotate(-30 819.1 798)">2024-06-01</text>
<text x="898.3" y="801.5" font-family="Liberation Sans" font-size="9.7" fill="#6e7079" text-anchor="end" transform="rotate(-30 898.3 798)">2024-08-01</text>
<text x="977.5" y="801.5" font-family="Liberation Sans" font-size="9.7" fill="#6e7079" text-anchor="end" transform="rotate(-30 977.5 798)">2024-10-01</text>
<text x="1056.6" y="801.5" font-family="Liberation Sans" font-size="9.7" fill="#6e7079" text-anchor="end" transform="rotate(-30 1056.6 798)">2024-12-01</text>
<text x="1135.8" y="801.5" font-family="Liberation Sans" font-size="9.7" fill="#6e7079" text-anchor="end" transform="rotate(-30 1135.8 798)">2025-02-01</text>
<text x="1215.0" y="801.5" font-family="Liberation Sans" font-size="9.7" fill="#6e7079" text-anchor="end" transform="rotate(-30 1215.0 798)">2025-04-01</text>
<text x="1294.1" y="801.5" font-family="Liberation Sans" font-size="9.7" fill="#6e7079" text-anchor="end" transform="rotate(-30 1294.1 798)">2025-06-01</text>
<text x="1373.3" y="801.5" font-family="Liberation Sans" font-size="9.7" fill="#6e7079" text-anchor="end" transform="rotate(-30 1373.3 798)">2025-08-01</text>
<text x="1452.5" y="801.5" font-family="Liberation Sans" font-size="9.7" fill="#6e7079" text-anchor="end" transform="rotate(-30 1452.5 798)">2025-10-01</text>
<text x="1531.6" y="801.5" font-family="Liberation Sans" font-size="9.7" fill="#6e7079" text-anchor="end" transform="rotate(-30 1531.6 798)">2025-12-01</text>
<text x="1610.8" y="801.5" font-family="Liberation Sans" font-size="9.7" fill="#6e7079" text-anchor="end" transform="rotate(-30 1610.8 798)">2026-02-01</text>
<path d="M253.0 789.8V788.3Q253.0 784.3 257.0 784.3H275.9Q279.9 784.3 279.9 788.3V789.8Z" fill="url(#gy)"/>
<path d="M292.6 789.8V788.3Q292.6 784.3 296.6 784.3H315.5Q319.5 784.3 319.5 788.3V789.8Z" fill="url(#gy)"/>
<path d="M332.2 789.8V789.8Q332.2 787.3 334.7 787.3H356.6Q359.1 787.3 359.1 789.8V789.8Z" fill="url(#gy)"/>
<path d="M371.8 789.8V743.2Q371.8 739.2 375.8 739.2H394.7Q398.7 739.2 398.7 743.2V789.8Z" fill="url(#gy)"/>
<path d="M411.3 789.8V737.2Q411.3 733.2 415.3 733.2H434.2Q438.2 733.2 438.2 737.2V789.8Z" fill="url(#gy)"/>
<path d="M490.5 789.8V773.3Q490.5 769.3 494.5 769.3H513.4Q517.4 769.3 517.4 773.3V789.8Z" fill="url(#gy)"/>
<path d="M530.1 789.8V773.3Q530.1 769.3 534.1 769.3H553.0Q557.0 769.3 557.0 773.3V789.8Z" fill="url(#gy)"/>
<path d="M569.7 789.8V752.2Q569.7 748.2 573.7 748.2H592.6Q596.6 748.2 596.6 752.2V789.8Z" fill="url(#gy)"/>
<path d="M609.3 789.8V758.3Q609.3 754.3 613.3 754.3H632.2Q636.2 754.3 636.2 758.3V789.8Z" fill="url(#gy)"/>
<path d="M648.9 789.8V719.2Q648.9 715.2 652.9 715.2H671.8Q675.8 715.2 675.8 719.2V789.8Z" fill="url(#gy)"/>
<path d="M688.4 789.8V755.2Q688.4 751.2 692.4 751.2H711.3Q715.3 751.2 715.3 755.2V789.8Z" fill="url(#gy)"/>
<path d="M728.0 789.8V683.2Q728.0 679.2 732.0 679.2H750.9Q754.9 679.2 754.9 683.2V789.8Z" fill="url(#gy)"/>
<path d="M767.6 789.8V656.1Q767.6 652.1 771.6 652.1H790.5Q794.5 652.1 794.5 656.1V789.8Z" fill="url(#gy)"/>
<path d="M807.2 789.8V752.2Q807.2 748.2 811.2 748.2H830.1Q834.1 748.2 834.1 752.2V789.8Z" fill="url(#gy)"/>
<path d="M846.8 789.8V704.2Q846.8 700.2 850.8 700.2H869.7Q873.7 700.2 873.7 704.2V789.8Z" fill="url(#gy)"/>
<path d="M886.4 789.8V659.1Q886.4 655.1 890.4 655.1H909.3Q913.3 655.1 913.3 659.1V789.8Z" fill="url(#gy)"/>
<path d="M925.9 789.8V692.2Q925.9 688.2 929.9 688.2H948.8Q952.8 688.2 952.8 692.2V789.8Z" fill="url(#gg)"/>
<path d="M965.5 789.8V752.2Q965.5 748.2 969.5 748.2H988.4Q992.4 748.2 992.4 752.2V789.8Z" fill="url(#gg)"/>
<path d="M1005.1 789.8V752.2Q1005.1 748.2 1009.1 748.2H1028.0Q1032.0 748.2 1032.0 752.2V789.8Z" fill="url(#gg)"/>
<path d="M1044.7 789.8V740.2Q1044.7 736.2 1048.7 736.2H1067.6Q1071.6 736.2 1071.6 740.2V789.8Z" fill="url(#gg)"/>
<path d="M1084.3 789.8V752.2Q1084.3 748.2 1088.3 748.2H1107.2Q1111.2 748.2 1111.2 752.2V789.8Z" fill="url(#gg)"/>
<path d="M1123.9 789.8V752.2Q1123.9 748.2 1127.9 748.2H1146.8Q1150.8 748.2 1150.8 752.2V789.8Z" fill="url(#gg)"/>
<path d="M1163.4 789.8V755.2Q1163.4 751.2 1167.4 751.2H1186.3Q1190.3 751.2 1190.3 755.2V789.8Z" fill="url(#gg)"/>
<path d="M1203.0 789.8V746.2Q1203.0 742.2 1207.0 742.2H1225.9Q1229.9 742.2 1229.9 746.2V789.8Z" fill="url(#gg)"/>
<path d="M1242.6 789.8V743.2Q1242.6 739.2 1246.6 739.2H1265.5Q1269.5 739.2 1269.5 743.2V789.8Z" fill="url(#gg)"/>
<path d="M1282.2 789.8V752.2Q1282.2 748.2 1286.2 748.2H1305.1Q1309.1 748.2 1309.1 752.2V789.8Z" fill="url(#gg)"/>
<path d="M1321.8 789.8V701.2Q1321.8 697.2 1325.8 697.2H1344.7Q1348.7 697.2 1348.7 701.2V789.8Z" fill="url(#gg)"/>
<path d="M1361.4 789.8V695.2Q1361.4 691.2 1365.4 691.2H1384.3Q1388.3 691.2 1388.3 695.2V789.8Z" fill="url(#gg)"/>
<path d="M1400.9 789.8V749.2Q1400.9 745.2 1404.9 745.2H1423.8Q1427.8 745.2 1427.8 749.2V789.8Z" fill="url(#gg)"/>
<path d="M1440.5 789.8V734.2Q1440.5 730.2 1444.5 730.2H1463.4Q1467.4 730.2 1467.4 734.2V789.8Z" fill="url(#gg)"/>
<path d="M1480.1 789.8V734.2Q1480.1 730.2 1484.1 730.2H1503.0Q1507.0 730.2 1507.0 734.2V789.8Z" fill="url(#gg)"/>
<path d="M1519.7 789.8V716.2Q1519.7 712.2 1523.7 712.2H1542.6Q1546.6 712.2 1546.6 716.2V789.8Z" fill="url(#gg)"/>
<path d="M1559.3 789.8V722.2Q1559.3 718.2 1563.3 718.2H1582.2Q1586.2 718.2 1586.2 722.2V789.8Z" fill="url(#gg)"/>
<path d="M1598.9 789.8V686.2Q1598.9 682.2 1602.9 682.2H1621.8Q1625.8 682.2 1625.8 686.2V789.8Z" fill="url(#gg)"/>
<polyline points="266.5,784.3 306.0,784.3 345.6,787.3 385.2,739.2 424.8,733.2" fill="none" stroke="#f26b1d" stroke-width="2" stroke-linejoin="round"/>
<polyline points="504.0,769.3 543.5,769.3 583.1,748.2 622.7,754.3 662.3,715.2 701.9,751.2 741.5,679.2 781.1,652.1 820.6,748.2 860.2,700.2 899.8,655.1" fill="none" stroke="#f26b1d" stroke-width="2" stroke-linejoin="round"/>
<circle cx="266.5" cy="784.3" r="2.6" fill="#fff" stroke="#f26b1d" stroke-width="1.5"/>
<circle cx="306.0" cy="784.3" r="2.6" fill="#fff" stroke="#f26b1d" stroke-width="1.5"/>
<circle cx="345.6" cy="787.3" r="2.6" fill="#fff" stroke="#f26b1d" stroke-width="1.5"/>
<circle cx="385.2" cy="739.2" r="2.6" fill="#fff" stroke="#f26b1d" stroke-width="1.5"/>
<circle cx="424.8" cy="733.2" r="2.6" fill="#fff" stroke="#f26b1d" stroke-width="1.5"/>
<circle cx="504.0" cy="769.3" r="2.6" fill="#fff" stroke="#f26b1d" stroke-width="1.5"/>
<circle cx="543.5" cy="769.3" r="2.6" fill="#fff" stroke="#f26b1d" stroke-width="1.5"/>
<circle cx="583.1" cy="748.2" r="2.6" fill="#fff" stroke="#f26b1d" stroke-width="1.5"/>
<circle cx="622.7" cy="754.3" r="2.6" fill="#fff" stroke="#f26b1d" stroke-width="1.5"/>
<circle cx="662.3" cy="715.2" r="2.6" fill="#fff" stroke="#f26b1d" stroke-width="1.5"/>
<circle cx="701.9" cy="751.2" r="2.6" fill="#fff" stroke="#f26b1d" stroke-width="1.5"/>
<circle cx="741.5" cy="679.2" r="2.6" fill="#fff" stroke="#f26b1d" stroke-width="1.5"/>
<circle cx="781.1" cy="652.1" r="2.6" fill="#fff" stroke="#f26b1d" stroke-width="1.5"/>
<circle cx="820.6" cy="748.2" r="2.6" fill="#fff" stroke="#f26b1d" stroke-width="1.5"/>
<circle cx="860.2" cy="700.2" r="2.6" fill="#fff" stroke="#f26b1d" stroke-width="1.5"/>
<circle cx="899.8" cy="655.1" r="2.6" fill="#fff" stroke="#f26b1d" stroke-width="1.5"/>
<polyline points="939.4,688.2 979.0,748.2 1018.6,748.2 1058.1,748.2 1097.7,748.2 1137.3,748.2 1176.9,751.2 1216.5,742.2 1256.1,739.2 1295.6,748.2 1335.2,697.2 1374.8,691.2 1414.4,745.2 1454.0,730.2 1493.6,730.2 1533.1,712.2 1572.7,718.2 1612.3,682.2" fill="none" stroke="#a6dff0" stroke-width="2" stroke-linejoin="round"/>
<circle cx="939.4" cy="688.2" r="2.6" fill="#fff" stroke="#a6dff0" stroke-width="1.5"/>
<circle cx="979.0" cy="748.2" r="2.6" fill="#fff" stroke="#a6dff0" stroke-width="1.5"/>
<circle cx="1018.6" cy="748.2" r="2.6" fill="#fff" stroke="#a6dff0" stroke-width="1.5"/>
<circle cx="1058.1" cy="748.2" r="2.6" fill="#fff" stroke="#a6dff0" stroke-width="1.5"/>
<circle cx="1097.7" cy="748.2" r="2.6" fill="#fff" stroke="#a6dff0" stroke-width="1.5"/>
<circle cx="1137.3" cy="748.2" r="2.6" fill="#fff" stroke="#a6dff0" stroke-width="1.5"/>
<circle cx="1176.9" cy="751.2" r="2.6" fill="#fff" stroke="#a6dff0" stroke-width="1.5"/>
<circle cx="1216.5" cy="742.2" r="2.6" fill="#fff" stroke="#a6dff0" stroke-width="1.5"/>
<circle cx="1256.1" cy="739.2" r="2.6" fill="#fff" stroke="#a6dff0" stroke-width="1.5"/>
<circle cx="1295.6" cy="748.2" r="2.6" fill="#fff" stroke="#a6dff0" stroke-width="1.5"/>
<circle cx="1335.2" cy="697.2" r="2.6" fill="#fff" stroke="#a6dff0" stroke-width="1.5"/>
<circle cx="1374.8" cy="691.2" r="2.6" fill="#fff" stroke="#a6dff0" stroke-width="1.5"/>
<circle cx="1414.4" cy="745.2" r="2.6" fill="#fff" stroke="#a6dff0" stroke-width="1.5"/>
<circle cx="1454.0" cy="730.2" r="2.6" fill="#fff" stroke="#a6dff0" stroke-width="1.5"/>
<circle cx="1493.6" cy="730.2" r="2.6" fill="#fff" stroke="#a6dff0" stroke-width="1.5"/>
<circle cx="1533.1" cy="712.2" r="2.6" fill="#fff" stroke="#a6dff0" stroke-width="1.5"/>
<circle cx="1572.7" cy="718.2" r="2.6" fill="#fff" stroke="#a6dff0" stroke-width="1.5"/>
<circle cx="1612.3" cy="682.2" r="2.6" fill="#fff" stroke="#a6dff0" stroke-width="1.5"/>
<text x="266.5" y="778.2" font-family="Liberation Sans" font-size="10" fill="#374151" text-anchor="middle">2</text>
<text x="306.0" y="778.2" font-family="Liberation Sans" font-size="10" fill="#374151" text-anchor="middle">2</text>
<text x="345.6" y="781.2" font-family="Liberation Sans" font-size="10" fill="#374151" text-anchor="middle">1</text>
<text x="385.2" y="733.1" font-family="Liberation Sans" font-size="10" fill="#374151" text-anchor="middle">17</text>
<text x="424.8" y="727.1" font-family="Liberation Sans" font-size="10" fill="#374151" text-anchor="middle">19</text>
<text x="504.0" y="763.2" font-family="Liberation Sans" font-size="10" fill="#374151" text-anchor="middle">7</text>
<text x="543.5" y="763.2" font-family="Liberation Sans" font-size="10" fill="#374151" text-anchor="middle">7</text>
<text x="583.1" y="742.1" font-family="Liberation Sans" font-size="10" fill="#374151" text-anchor="middle">14</text>
<text x="622.7" y="748.2" font-family="Liberation Sans" font-size="10" fill="#374151" text-anchor="middle">12</text>
<text x="662.3" y="709.1" font-family="Liberation Sans" font-size="10" fill="#374151" text-anchor="middle">25</text>
<text x="701.9" y="745.1" font-family="Liberation Sans" font-size="10" fill="#374151" text-anchor="middle">13</text>
<text x="741.5" y="673.1" font-family="Liberation Sans" font-size="10" fill="#374151" text-anchor="middle">37</text>
<text x="781.1" y="646.0" font-family="Liberation Sans" font-size="10" fill="#374151" text-anchor="middle">46</text>
<text x="820.6" y="742.1" font-family="Liberation Sans" font-size="10" fill="#374151" text-anchor="middle">14</text>
<text x="860.2" y="694.1" font-family="Liberation Sans" font-size="10" fill="#374151" text-anchor="middle">30</text>
<text x="899.8" y="649.0" font-family="Liberation Sans" font-size="10" fill="#374151" text-anchor="middle">45</text>
<text x="939.4" y="682.1" font-family="Liberation Sans" font-size="10" fill="#374151" text-anchor="middle">34</text>
<text x="979.0" y="742.1" font-family="Liberation Sans" font-size="10" fill="#374151" text-anchor="middle">14</text>
<text x="1018.6" y="742.1" font-family="Liberation Sans" font-size="10" fill="#374151" text-anchor="middle">14</text>
<text x="1058.1" y="730.1" font-family="Liberation Sans" font-size="10" fill="#374151" text-anchor="middle">18</text>
<text x="1097.7" y="742.1" font-family="Liberation Sans" font-size="10" fill="#374151" text-anchor="middle">14</text>
<text x="1137.3" y="742.1" font-family="Liberation Sans" font-size="10" fill="#374151" text-anchor="middle">14</text>
<text x="1176.9" y="745.1" font-family="Liberation Sans" font-size="10" fill="#374151" text-anchor="middle">13</text>
<text x="1216.5" y="736.1" font-family="Liberation Sans" font-size="10" fill="#374151" text-anchor="middle">16</text>
<text x="1256.1" y="733.1" font-family="Liberation Sans" font-size="10" fill="#374151" text-anchor="middle">17</text>
<text x="1295.6" y="742.1" font-family="Liberation Sans" font-size="10" fill="#374151" text-anchor="middle">14</text>
<text x="1335.2" y="691.1" font-family="Liberation Sans" font-size="10" fill="#374151" text-anchor="middle">31</text>
<text x="1374.8" y="685.1" font-family="Liberation Sans" font-size="10" fill="#374151" text-anchor="middle">33</text>
<text x="1414.4" y="739.1" font-family="Liberation Sans" font-size="10" fill="#374151" text-anchor="middle">15</text>
<text x="1454.0" y="724.1" font-family="Liberation Sans" font-size="10" fill="#374151" text-anchor="middle">20</text>
<text x="1493.6" y="724.1" font-family="Liberation Sans" font-size="10" fill="#374151" text-anchor="middle">20</text>
<text x="1533.1" y="706.1" font-family="Liberation Sans" font-size="10" fill="#374151" text-anchor="middle">26</text>
<text x="1572.7" y="712.1" font-family="Liberation Sans" font-size="10" fill="#374151" text-anchor="middle">24</text>
<text x="1612.3" y="676.1" font-family="Liberation Sans" font-size="10" fill="#374151" text-anchor="middle">36</text>
<rect x="700.2" y="833.2" width="24.8" height="12.2" rx="3" fill="url(#gy)"/>
<text x="730.6" y="843.8" font-family="Liberation Sans" font-size="12" fill="#374151">Actuals</text>
<line x1="780.9" x2="805.5" y1="839.3" y2="839.3" stroke="#f26b1d" stroke-width="2"/><circle cx="793.2" cy="839.3" r="5" fill="#fff" stroke="#f26b1d" stroke-width="2"/>
<text x="811" y="843.8" font-family="Liberation Sans" font-size="12" fill="#374151">Actuals clean</text>
<line x1="893" x2="917.7" y1="839.3" y2="839.3" stroke="#a6dff0" stroke-width="2"/><circle cx="905.3" cy="839.3" r="5" fill="#fff" stroke="#a6dff0" stroke-width="2"/>
<text x="923" y="843.8" font-family="Liberation Sans" font-size="12" fill="#374151">Stat. Forecast</text>
<rect x="1007.8" y="833.2" width="24.8" height="12.2" rx="3" fill="url(#gg)"/>
<text x="1038" y="843.8" font-family="Liberation Sans" font-size="12" fill="#374151">Final Forecast</text>
</svg>
</div>
</div></body></html>
